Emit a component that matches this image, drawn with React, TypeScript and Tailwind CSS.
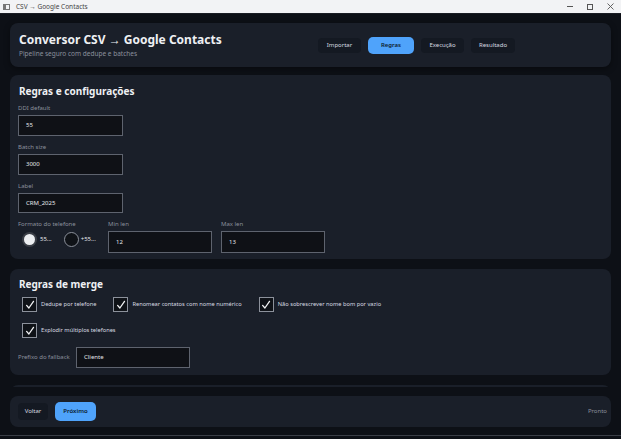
import React from "react";

const Check = () => (
  <svg width="10" height="10" viewBox="0 0 10 10" fill="none">
    <path d="M1.6 5.4 L3.9 8 L8.5 1.4" stroke="#f2f3f5" strokeWidth="1.3" strokeLinecap="round" strokeLinejoin="round" />
  </svg>
);

function CheckItem({ label, className = "" }: { label: string; className?: string }) {
  return (
    <div className={"flex items-center gap-[4px] " + className}>
      <div className="w-[15px] h-[15px] border border-[#8c919b] bg-[#0f1217] flex items-center justify-center">
        <Check />
      </div>
      <span className="text-[5.7px] text-[#d7dae0]">{label}</span>
    </div>
  );
}

function Field({ label, value, w = "w-[105px]", h = "h-[21px]" }: { label: string; value: string; w?: string; h?: string }) {
  return (
    <div className="flex flex-col">
      <span className="text-[6px] text-[#8a909c] leading-[8px] h-[8px]">{label}</span>
      <div className={"mt-[3px] border border-[#5e636e] bg-[#0f1116] flex items-center px-[7px] text-[6px] text-[#e4e6ea] " + w + " " + h}>
        {value}
      </div>
    </div>
  );
}

export default function App() {
  return (
    <div className="w-[621px] h-[439px] bg-[#0d1016] flex flex-col overflow-hidden font-['Noto_Sans',sans-serif]">
      {/* title bar */}
      <div className="h-[14px] shrink-0 bg-[#f2f3f5] flex items-center text-[#333] border-b border-[#1a1d24]">
        <div className="ml-[3px] w-[7px] h-[6px] border border-[#777] flex">
          <div className="w-[2px] h-full bg-[#777]" />
        </div>
        <span className="ml-[6px] text-[6.5px] text-[#444]">CSV → Google Contacts</span>
        <div className="ml-auto flex items-center text-[#444]">
          <div className="w-[20px] flex justify-center"><div className="w-[6px] h-[1px] bg-[#555]" /></div>
          <div className="w-[20px] flex justify-center"><div className="w-[6px] h-[6px] border border-[#555]" /></div>
          <div className="w-[20px] flex justify-center mr-[1px]">
            <svg width="7" height="7" viewBox="0 0 7 7"><path d="M0.5 0.5 L6.5 6.5 M6.5 0.5 L0.5 6.5" stroke="#555" strokeWidth="0.9" /></svg>
          </div>
        </div>
      </div>

      <div className="flex-1 flex flex-col px-[10px] pt-[9px]">
        {/* header */}
        <div className="h-[44px] shrink-0 rounded-[8px] bg-[#1a1f29] flex items-center pl-[9px] pr-[10px] shadow-[0_2px_6px_rgba(0,0,0,0.4)]">
          <div className="flex flex-col w-[299px]">
            <span className="text-[12px] font-bold text-[#eef0f3] leading-[14px]">Conversor CSV → Google Contacts</span>
            <span className="mt-[3px] text-[6.5px] text-[#8a909c] leading-[8px]">Pipeline seguro com dedupe e batches</span>
          </div>
          <div className="flex items-center gap-[7px] text-[6px]">
            <div className="w-[43px] h-[15px] rounded-[4px] bg-[#141922] text-[#d7dae0] flex items-center justify-center">Importar</div>
            <div className="w-[46px] h-[17px] rounded-[5px] bg-[#4fa3fb] text-[#0d1b2e] font-semibold flex items-center justify-center">Regras</div>
            <div className="w-[43px] h-[15px] rounded-[4px] bg-[#141922] text-[#d7dae0] flex items-center justify-center">Execução</div>
            <div className="w-[44px] h-[15px] rounded-[4px] bg-[#141922] text-[#d7dae0] flex items-center justify-center">Resultado</div>
          </div>
        </div>

        {/* scroll area */}
        <div className="mt-[8px] h-[312px] shrink-0 overflow-hidden flex flex-col gap-[10px]">
          <div className="h-[184px] shrink-0 rounded-[8px] bg-[#1a1f29] px-[8px] pt-[10px]">
            <div className="text-[10px] font-bold text-[#eef0f3] leading-[12px] ml-[1px]">Regras e configurações</div>
            <div className="mt-[7px] flex flex-col gap-[7px]">
              <Field label="DDI default" value="55" />
              <Field label="Batch size" value="3000" />
              <Field label="Label" value="CRM_2025" h="h-[20px]" />
              <div className="flex items-start">
                <div className="flex flex-col w-[90px]">
                  <span className="text-[6px] text-[#8a909c] leading-[8px] h-[8px]">Formato do telefone</span>
                  <div className="mt-[4px] flex items-center ml-[4px]">
                    <div className="w-[15px] h-[15px] rounded-full bg-[#3a3e46] flex items-center justify-center">
                      <div className="w-[11px] h-[11px] rounded-full bg-[#eceef1]" />
                    </div>
                    <span className="ml-[3px] text-[6px] text-[#e4e6ea]">55...</span>
                    <div className="ml-[12px] w-[15px] h-[15px] rounded-full border-[1.5px] border-[#8c919b] bg-[#0f1217]" />
                    <span className="ml-[2px] text-[6px] text-[#e4e6ea]">+55...</span>
                  </div>
                </div>
                <div className="w-[113px]"><Field label="Min len" value="12" w="w-[104px]" h="h-[22px]" /></div>
                <Field label="Max len" value="13" w="w-[104px]" h="h-[22px]" />
              </div>
            </div>
          </div>

          <div className="h-[106px] shrink-0 rounded-[8px] bg-[#1a1f29] px-[8px] pt-[9px]">
            <div className="text-[10px] font-bold text-[#eef0f3] leading-[12px] ml-[1px]">Regras de merge</div>
            <div className="mt-[7px] flex items-center pl-[4px]">
              <CheckItem label="Dedupe por telefone" />
              <CheckItem label="Renomear contatos com nome numérico" className="ml-[17px]" />
              <CheckItem label="Não sobrescrever nome bom por vazio" className="ml-[17px]" />
            </div>
            <div className="mt-[11px] flex items-center pl-[4px]">
              <CheckItem label="Explodir múltiplos telefones" />
            </div>
            <div className="mt-[9px] flex items-center">
              <span className="text-[6px] text-[#8a909c] w-[58px]">Prefixo do fallback</span>
              <div className="h-[21px] w-[114px] border border-[#5e636e] bg-[#0f1116] flex items-center px-[7px] text-[6px] text-[#e4e6ea]">
                Cliente
              </div>
            </div>
          </div>

          <div className="h-[60px] shrink-0 rounded-[8px] bg-[#1a1f29]" />
        </div>

        {/* footer */}
        <div className="mt-[9px] h-[31px] shrink-0 rounded-[8px] bg-[#1a1f29] flex items-center px-[8px]">
          <div className="w-[30px] h-[17px] rounded-[4px] bg-[#141922] text-[6px] text-[#d7dae0] flex items-center justify-center">Voltar</div>
          <div className="ml-[7px] w-[41px] h-[19px] rounded-[5px] bg-[#4fa3fb] text-[6px] font-semibold text-[#0d1b2e] flex items-center justify-center">Próximo</div>
          <span className="ml-auto mr-[-4px] text-[6px] text-[#8a909c]">Pronto</span>
        </div>

        <div className="mt-[8px] h-[1px] bg-[#3a3e46] -mx-[10px]" />
      </div>
    </div>
  );
}
